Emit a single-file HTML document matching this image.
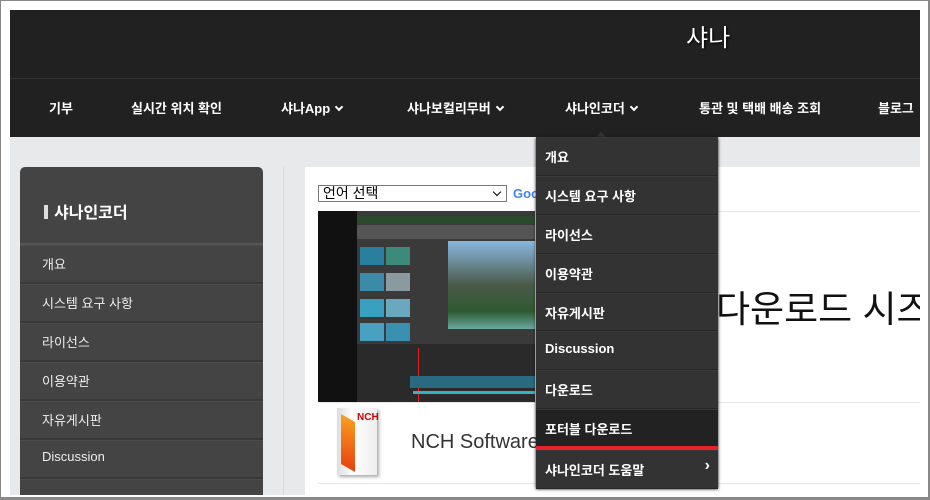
<!DOCTYPE html>
<html style="overflow:hidden;width:930px;height:500px"><head><meta charset="utf-8"><style>
*{margin:0;padding:0;box-sizing:border-box}
body{width:930px;height:500px;overflow:hidden;background:#fff;font-family:"Liberation Sans","Noto Sans CJK KR",sans-serif;position:relative}
.frame{position:absolute;left:0;top:0;width:930px;height:500px;border:1px solid #888;border-bottom:3px solid #888;border-right:2px solid #888}
.hdr{position:absolute;left:10px;top:10px;width:910px;height:127px;background:#212121}
.hdr .sep{position:absolute;left:0;top:68px;width:100%;height:1px;background:#333}
.logo{position:absolute;left:686px;top:18px;color:#fff;font-size:24px;text-shadow:1px 1px 2px #000}
.nav{position:absolute;top:98px;color:#fff;font-size:13px;font-weight:bold;white-space:nowrap}
.chev{display:inline-block;width:6px;height:6px;border-right:2px solid #fff;border-bottom:2px solid #fff;transform:rotate(45deg);margin-left:6px;position:relative;top:-3px}
.content{position:absolute;left:10px;top:137px;width:910px;height:358px;background:#e8e9eb}
.side{position:absolute;left:20px;top:167px;width:243px;height:328px;background:#444;border-radius:5px 5px 0 0;overflow:hidden}
.side .t{height:78px;color:#fff;font-size:16px;font-weight:bold;padding:32px 0 0 24px;border-bottom:2px solid #555}
.side .t b{display:inline-block;width:4px;height:14px;background:#ddd;margin-right:6px;vertical-align:-1px}
.side .i{height:39px;color:#eee;font-size:13px;padding:8px 0 0 22px;border-bottom:2px solid #383838;border-top:1px solid #4c4c4c}
.vline{position:absolute;left:283px;top:167px;width:1px;height:328px;background:#d8d9db}
.main{position:absolute;left:305px;top:167px;width:615px;height:328px;background:#fff;overflow:hidden}
.sel{position:absolute;left:318px;top:185px;width:189px;height:17px;border:1px solid #777;background:#fff;font-size:14px;line-height:15px;padding-left:4px;color:#000}
.sel:after{content:"";position:absolute;right:6px;top:3px;width:5px;height:5px;border-right:1.5px solid #000;border-bottom:1.5px solid #000;transform:rotate(45deg)}
.goo{position:absolute;left:513px;top:186px;font-size:13px;color:#4285f4;font-weight:bold}
.hl{position:absolute;left:318px;height:1px;background:#e6e6e6}
.img{position:absolute;left:318px;top:211px;width:217px;height:191px;background:#111;overflow:hidden}
.big{position:absolute;left:411px;top:112px;font-size:37px;color:#111;white-space:nowrap}
.nch{position:absolute;left:411px;top:431px;font-size:20px;color:#333}
.box{position:absolute;left:337px;top:408px;width:40px;height:67px;background:linear-gradient(90deg,#ddd,#fff 40%,#eee);box-shadow:2px 2px 3px #aaa}
.dd{position:absolute;left:536px;top:137px;width:182px;height:351px;background:#333;box-shadow:0 1px 3px #000}
.dd div{height:38.9px;color:#fff;font-size:13px;font-weight:bold;padding:9px 0 0 9px;border-bottom:1px solid #262626;border-top:1px solid #3a3a3a;position:relative}
.dd .act{background:#222;border-bottom:4px solid #e8202a;height:41px}
</style></head><body>
<div class="hdr"><div class="sep"></div></div>
<div class="logo">샤나</div>
<div class="nav" style="left:49px">기부</div>
<div class="nav" style="left:131px">실시간 위치 확인</div>
<div class="nav" style="left:281px">샤나App<span class="chev"></span></div>
<div class="nav" style="left:407px">샤나보컬리무버<span class="chev"></span></div>
<div class="nav" style="left:565px">샤나인코더<span class="chev"></span></div>
<div class="nav" style="left:699px">통관 및 택배 배송 조회</div>
<div class="nav" style="left:878px">블로그</div>
<div style="position:absolute;top:132px;width:0;height:0;border-left:5px solid transparent;border-right:5px solid transparent;border-bottom:5px solid #333;left:596px"></div>
<div class="content"></div>
<div class="side">
<div class="t"><b></b>샤나인코더</div>
<div class="i">개요</div><div class="i">시스템 요구 사항</div><div class="i">라이선스</div><div class="i">이용약관</div><div class="i">자유게시판</div><div class="i">Discussion</div><div class="i"></div>
</div>
<div class="vline"></div>
<div class="main"><div class="big">다운로드 시즈</div></div>
<div class="sel">언어 선택</div>
<div class="goo">Goo</div>
<div class="hl" style="top:211px;width:602px"></div>
<div class="hl" style="top:402px;width:602px"></div>
<div class="img">
<div style="position:absolute;left:39px;top:0;width:178px;height:191px;background:#3a3a3a"></div>
<div style="position:absolute;left:39px;top:5px;width:178px;height:8px;background:#2b4a2b"></div>
<div style="position:absolute;left:39px;top:14px;width:178px;height:14px;background:#555"></div>
<div style="position:absolute;left:42px;top:36px;width:24px;height:18px;background:#2a7fa0"></div>
<div style="position:absolute;left:68px;top:36px;width:24px;height:18px;background:#3e8a7a"></div>
<div style="position:absolute;left:42px;top:62px;width:24px;height:18px;background:#3a8aa8"></div>
<div style="position:absolute;left:68px;top:62px;width:24px;height:18px;background:#8a9aa0"></div>
<div style="position:absolute;left:42px;top:88px;width:24px;height:18px;background:#3aa0c0"></div>
<div style="position:absolute;left:68px;top:88px;width:24px;height:18px;background:#6aa8c0"></div>
<div style="position:absolute;left:42px;top:112px;width:24px;height:18px;background:#4aa0c0"></div>
<div style="position:absolute;left:68px;top:112px;width:24px;height:18px;background:#3a90b0"></div>
<div style="position:absolute;left:130px;top:30px;width:87px;height:88px;background:linear-gradient(#8ab8e0,#4a5a48 50%,#2e5a30 80%,#6aa8a0)"></div>
<div style="position:absolute;left:39px;top:133px;width:178px;height:58px;background:#2a2a2a"></div>
<div style="position:absolute;left:100px;top:137px;width:16px;height:54px;border-left:1px solid #e02020"></div>
<div style="position:absolute;left:92px;top:165px;width:125px;height:12px;background:#2a6a80"></div>
<div style="position:absolute;left:95px;top:180px;width:122px;height:3px;background:#3ab0c0"></div>
</div>
<div class="box"><div style="position:absolute;left:4px;top:10px;width:14px;height:50px;background:linear-gradient(160deg,#f9a020,#e84010);transform:skewY(30deg)"></div><div style="position:absolute;left:20px;top:4px;font-size:10px;font-weight:bold;color:#c00">NCH</div></div>
<div class="nch">NCH Software</div>
<div class="hl" style="top:483px;width:602px"></div>
<div class="dd">
<div>개요</div><div>시스템 요구 사항</div><div>라이선스</div><div>이용약관</div><div>자유게시판</div><div>Discussion</div><div>다운로드</div><div class="act">포터블 다운로드</div><div>샤나인코더 도움말<span style="position:absolute;right:8px;top:6px;font-size:16px">›</span></div>
</div>
<div class="frame"></div>
</body></html>
